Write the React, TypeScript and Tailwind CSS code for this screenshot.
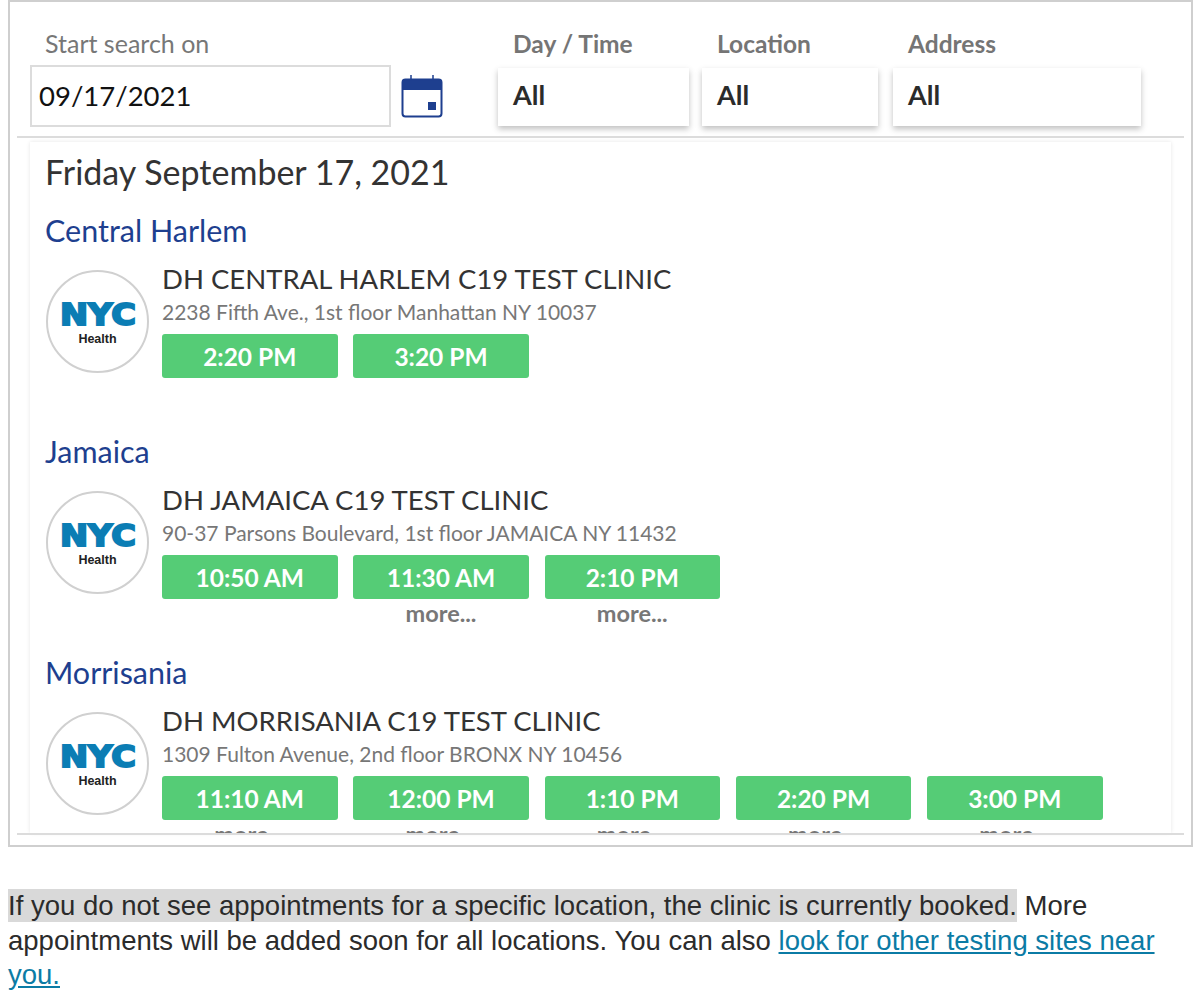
const ui = "font-['Lato','Noto_Sans',sans-serif]"

const clinics = [
  {
    area: "Central Harlem",
    name: "DH CENTRAL HARLEM C19 TEST CLINIC",
    address: "2238 Fifth Ave., 1st floor Manhattan NY 10037",
    slots: [
      { time: "2:20 PM", more: false },
      { time: "3:20 PM", more: false },
    ],
  },
  {
    area: "Jamaica",
    name: "DH JAMAICA C19 TEST CLINIC",
    address: "90-37 Parsons Boulevard, 1st floor JAMAICA NY 11432",
    slots: [
      { time: "10:50 AM", more: false },
      { time: "11:30 AM", more: true },
      { time: "2:10 PM", more: true },
    ],
  },
  {
    area: "Morrisania",
    name: "DH MORRISANIA C19 TEST CLINIC",
    address: "1309 Fulton Avenue, 2nd floor BRONX NY 10456",
    slots: [
      { time: "11:10 AM", more: true },
      { time: "12:00 PM", more: true },
      { time: "1:10 PM", more: true },
      { time: "2:20 PM", more: true },
      { time: "3:00 PM", more: true },
    ],
  },
]

const filters = [
  { label: "Day / Time", width: "w-[191px]", mr: "mr-[13px]" },
  { label: "Location", width: "w-[176px]", mr: "mr-[15px]" },
  { label: "Address", width: "w-[248px]", mr: "" },
]

function CalendarIcon() {
  return (
    <svg width="44" height="44" viewBox="0 0 44 44" className="ml-[9px] mt-[72px] shrink-0">
      <path d="M11 1v6M33 1v6" stroke="#1e3f8f" strokeWidth="1.5" />
      <path d="M5 5h34a3 3 0 0 1 3 3v8H2V8a3 3 0 0 1 3-3z" fill="#1e3f8f" />
      <rect x="2.5" y="5.5" width="39" height="37" rx="3" fill="none" stroke="#1e3f8f" strokeWidth="2" />
      <rect x="28" y="28" width="8" height="8" fill="#1e3f8f" />
    </svg>
  )
}

function NycLogo() {
  return (
    <div className="ml-[1px] flex h-[103px] w-[103px] shrink-0 flex-col items-center rounded-full border-2 border-[#d0d0d0] bg-white">
      <div className="mt-[26px] h-[34px] scale-x-[1.12] font-['DejaVu_Sans',sans-serif] text-[30px] leading-[33px] font-bold text-[#0b7db4] [-webkit-text-stroke:2px_#0b7db4]">
        NYC
      </div>
      <div className="font-['Liberation_Sans',sans-serif] text-[12.5px] leading-[14px] font-bold text-[#222]">Health</div>
    </div>
  )
}

export default function App() {
  return (
    <div className="h-[991px] w-[1200px] overflow-hidden bg-white">
      <div className={`ml-[8px] flex h-[847px] w-[1185px] flex-col border-2 border-[#cfcfcf] px-[7px] ${ui}`}>
        <div className="flex h-[136px] shrink-0 border-b-2 border-[#dcdcdc]">
          <div className="ml-[13px] w-[361px] shrink-0">
            <div className="ml-[15px] mt-[24px] h-[39px] text-[25px] leading-[34px] text-[#777]">Start search on</div>
            <div className="flex h-[62px] items-center border-2 border-[#dcdcdc] pl-[7px] text-[27.5px] text-[#111]">09/17/2021</div>
          </div>
          <CalendarIcon />
          <div className="ml-[54px] flex">
            {filters.map((f) => (
              <div key={f.label} className={`${f.width} ${f.mr} shrink-0`}>
                <div className="ml-[15px] mt-[25px] h-[41px] text-[24.5px] leading-[34px] font-bold text-[#757575]">{f.label}</div>
                <div className="flex h-[58px] items-center bg-white pb-[4px] pl-[15px] text-[27px] font-bold text-[#2b2b2b] shadow-[0_3px_6px_rgba(0,0,0,0.25)]">
                  All
                </div>
              </div>
            ))}
          </div>
        </div>

        <div className="ml-[13px] mr-[13px] mt-[4px] min-h-0 flex-1 overflow-hidden pl-[15px] shadow-[0_0_4px_rgba(0,0,0,0.1)]">
          <h1 className="pt-[9px] h-[51px] text-[34px] leading-[42px] text-[#333]">Friday September 17, 2021</h1>
          {clinics.map((c) => (
            <section key={c.area} className="h-[221px] pt-[19px]">
              <h2 className="h-[36px] text-[30.5px] leading-[36px] text-[#1e3f8f]">{c.area}</h2>
              <div className="mt-[22px] flex">
                <NycLogo />
                <div className="ml-[13px]">
                  <div className="mt-[-9px] h-[36px] text-[27.5px] leading-[36px] text-[#333]">{c.name}</div>
                  <div className="mt-[2px] h-[27px] text-[21px] leading-[26px] text-[#777]">{c.address}</div>
                  <div className="mt-[8px] flex gap-[15.75px]">
                    {c.slots.map((s) => (
                      <div key={s.time} className="w-[175.5px]">
                        <div className="flex h-[44px] items-center justify-center rounded-[3px] bg-[#55cc76] pt-[2px] text-[24.5px] font-bold text-white">
                          {s.time}
                        </div>
                        {s.more && <div className="text-center text-[23.5px] leading-[28px] font-bold text-[#777]">more...</div>}
                      </div>
                    ))}
                  </div>
                </div>
              </div>
            </section>
          ))}
        </div>
        <div className="mb-[10px] h-[2px] shrink-0 bg-[#dcdcdc]" />
      </div>

      <p className="ml-[8px] mt-[42px] w-[1170px] font-['Liberation_Sans',sans-serif] text-[27.5px] leading-[34.5px] text-[#2b2b2b]">
        <span className="bg-[#d9d9d9] py-px">If you do not see appointments for a specific location, the clinic is currently booked.</span> More appointments will
        be added soon for all locations. You can also{" "}
        <a href="#" className="text-[#0b7ba5] underline">
          look for other testing sites near you.
        </a>
      </p>
    </div>
  )
}
